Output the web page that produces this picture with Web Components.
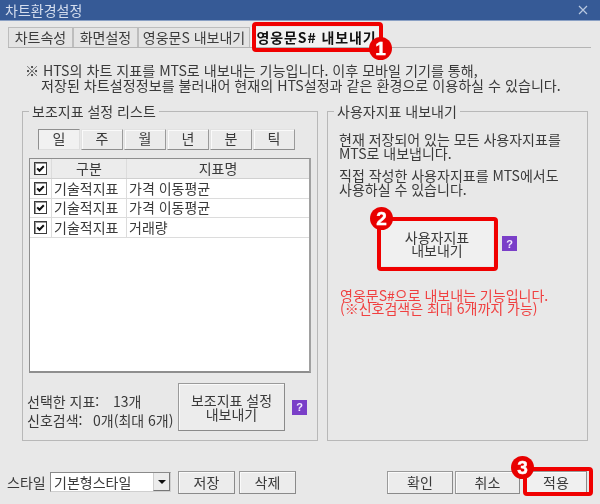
<!DOCTYPE html>
<html lang="ko">
<head>
<meta charset="utf-8">
<title>차트환경설정</title>
<style>
  html, body { margin: 0; padding: 0; background: #e8e8e8; }
  body { width: 600px; height: 504px; overflow: hidden; font: 14px "Noto Sans CJK KR", "Noto Sans", sans-serif; color: #333; }
</style>
</head>
<body>
<chart-dialog></chart-dialog>
<script>
// small helper so each element only has to give its css and markup
class Base extends HTMLElement {
  constructor() {
    super();
    this.attachShadow({ mode: 'open' });
    this.shadowRoot.innerHTML = `<style>${this.constructor.css}</style>${this.constructor.html}`;
  }
}

class TitleBar extends Base {
  static css = `
    :host { display: flex; justify-content: space-between; align-items: center; height: 20px; padding: 0 12px 0 5px; background: #365a96; color: #d5deee; font-size: 14px; border-bottom: 1px solid #8aa0c4; }
    svg { display: block; }
  `;
  static html = `<slot></slot><svg width="10" height="10" viewBox="0 0 10 10"><path d="M1 1l8 8M9 1l-8 8" stroke="#b9c8e0" stroke-width="1.2"/></svg>`;
}

class TabItem extends Base {
  static css = `
    :host { display: flex; align-items: center; justify-content: center; height: 20px; box-sizing: border-box; padding-bottom: 1px; background: #e4e4e4; border: 1px solid #bdbdbd; border-bottom: 0; color: #3c3c3c; font-size: 14px; white-space: nowrap; }
    :host([active]) { background: #f2f2f2; color: #111; font-weight: 700; border-color: transparent; margin-left: 1px; letter-spacing: 0.9px; }
  `;
  static html = `<slot></slot>`;
}

class TabBar extends Base {
  static css = `
    :host { display: flex; align-items: flex-end; height: 20px; margin: 6px 9px 0 8px; border-bottom: 1px solid #b4b4b4; }
  `;
  static html = `<slot></slot>`;
}

class GroupBox extends Base {
  static css = `
    :host { display: block; position: relative; box-sizing: border-box; border: 1px solid #b8b8b8; }
    .legend { position: absolute; left: 6px; top: -9px; padding: 0 3px; background: #e8e8e8; font-size: 14px; line-height: 16px; color: #3a3a3a; white-space: nowrap; }
  `;
  static html = `<div class="legend"><slot name="legend"></slot></div><slot></slot>`;
}

class PushButton extends Base {
  static css = `
    :host { display: flex; align-items: center; justify-content: center; box-sizing: border-box; text-align: center; background: #ececec; border: 1px solid #9a9a9a; border-right-color: #8a8a8a; border-bottom-color: #8a8a8a; box-shadow: inset 1px 1px 0 #fafafa; color: #3a3a3a; font-size: 14px; line-height: 14px; }
    :host([flat]) { border-color: #e2e2e2 #9a9a9a #8f8f8f #e2e2e2; background: #ebebeb; padding-bottom: 3px; }
    :host([down]) { background: #f1f1f1; border-color: #8f8f8f #dedede #dedede #8f8f8f; box-shadow: none; padding-bottom: 3px; }
  `;
  static html = `<div><slot></slot></div>`;
}

class HelpIcon extends Base {
  static css = `
    :host { display: flex; align-items: center; justify-content: center; width: 15px; height: 15px; background: #7a3fc8; color: #f2eaff; font: 700 11px "Liberation Sans", sans-serif; }
  `;
  static html = `?`;
}

class CheckBox extends Base {
  static css = `
    :host { display: block; width: 13px; height: 13px; box-sizing: border-box; background: #fff; border: 1px solid #3a3a3a; box-shadow: inset 1px 1px 0 #999; }
    svg { display: block; }
  `;
  static html = `<svg width="11" height="11" viewBox="0 0 11 11"><path d="M2.2 5.4l2.3 2.4 4.3-4.6" fill="none" stroke="#111" stroke-width="2"/></svg>`;
}

class IndicatorRow extends Base {
  static css = `
    :host { display: grid; grid-template-columns: 22px 75px 1fr; height: 19.5px; box-sizing: border-box; border-bottom: 1px solid #dcdcdc; background: #fff; font-size: 14px; color: #3a3a3a; }
    :host([head]) { background: #ececec; border-bottom-color: #d0d0d0; height: 20px; }
    :host([head]) .b, :host([head]) .c { justify-content: center; padding-left: 0; }
    div { display: flex; align-items: center; white-space: nowrap; overflow: hidden; }
    .a { justify-content: center; border-right: 1px solid #dcdcdc; }
    .b { padding-left: 2px; border-right: 1px solid #dcdcdc; }
    .c { padding-left: 2px; }
    .b, .c { padding-bottom: 1px; }
  `;
  static html = `<div class="a"><check-box></check-box></div><div class="b"><slot name="kind"></slot></div><div class="c"><slot name="name"></slot></div>`;
}

class IndicatorTable extends Base {
  static css = `
    :host { display: block; height: 215px; box-sizing: border-box; background: #fff; border: 1px solid #8e8e8e; border-bottom-width: 2px; border-right-width: 2px; border-right-color: #a0a0a0; }
  `;
  static html = `<slot></slot>`;
}

class CallOut extends Base {
  static css = `
    :host { position: absolute; box-sizing: border-box; border: 4px solid #f00000; border-radius: 4px; pointer-events: none; }
  `;
  static html = ``;
}

class NumberBadge extends Base {
  static css = `
    :host { position: absolute; display: flex; align-items: center; justify-content: center; width: 23px; height: 23px; border-radius: 50%; background: #e80000; color: #fff; font: 700 19px "Liberation Sans", sans-serif; -webkit-text-stroke: 0.4px #fff; }
  `;
  static html = `<slot></slot>`;
}

class StyleSelect extends Base {
  static css = `
    :host { display: flex; align-items: center; justify-content: space-between; width: 121px; height: 20px; box-sizing: border-box; padding-left: 3px; background: #fff; border: 1px solid #8a8a8a; border-right-color: #cfcfcf; border-bottom-color: #cfcfcf; font-size: 14px; color: #3a3a3a; white-space: nowrap; }
    .arrow { display: flex; align-items: center; justify-content: center; width: 17px; height: 18px; background: #ececec; border-left: 1px solid #cfcfcf; border-right: 1px solid #777; border-bottom: 1px solid #777; box-sizing: border-box; }
    .arrow i { border: 4px solid transparent; border-top: 4px solid #111; border-bottom: 0; }
  `;
  static html = `<slot></slot><div class="arrow"><i></i></div>`;
}

class ChartDialog extends Base {
  static css = `
    :host { display: block; position: relative; width: 600px; height: 504px; background: #e8e8e8; filter: blur(0.3px); }
    .notice { margin: 15px 0 0 25px; font-size: 14.1px; line-height: 15px; color: #3a3a3a; white-space: nowrap; }
    .notice span { display: block; padding-left: 16px; }
    .notice span:first-child { padding-left: 0; }
    .groups { display: flex; gap: 9px; margin: 18px 0 0 22px; }
    .left { width: 296px; height: 330px; padding: 17px 6px 0 6px; }
    .right { width: 261px; height: 330px; padding: 20px 0 0 11px; }
    .periods { display: grid; grid-template-columns: repeat(6, 42px); gap: 1px; margin: 0 0 8px 9px; width: 257px; }
    .periods push-button { height: 21px; }
    .sum { display: flex; align-items: center; margin-top: 10px; }
    .counts { width: 151px; margin: 8px 0 0 -2px; font-size: 14px; line-height: 19px; color: #3a3a3a; white-space: nowrap; }
    .counts b { display: inline-block; font-weight: 400; }
    .counts .k1 { width: 86px; }
    .counts .k2 { width: 66px; }
    .sum push-button { width: 107px; height: 48px; }
    .sum help-icon { margin-left: 7px; }
    .desc { font-size: 14px; line-height: 14px; color: #3a3a3a; white-space: nowrap; margin: 0; }
    .desc + .desc { margin-top: 8px; }
    .export { display: flex; align-items: center; margin: 25px 0 0 42px; }
    .export push-button { width: 112px; height: 45px; background: #f0f0f0; border-color: transparent; box-shadow: none; line-height: 13px; }
    .export help-icon { margin-left: 9px; }
    .warn { margin: 23px 0 0 1px; font-size: 14px; line-height: 13px; color: #f04040; white-space: nowrap; }
    .bottom { display: flex; align-items: center; margin: 29px 0 0 7px; height: 24px; }
    .bottom .lab { width: 43px; font-size: 14px; color: #3a3a3a; }
    .bottom .save { width: 57px; height: 23px; margin-left: 7px; }
    .bottom .del { width: 57px; height: 23px; margin-left: 4px; }
    .bottom .ok { width: 66px; height: 23px; margin-left: auto; }
    .bottom .no { width: 65px; height: 23px; margin-left: 2px; }
    .bottom .ap { width: 62px; height: 23px; margin: 0 13px 0 5px; background: #f0f0f0; }
    .t1 { width: 65px; } .t2 { width: 65px; } .t3 { width: 112px; } .t4 { width: 131px; }
    .r1 { left: 252px; top: 22px; width: 131px; height: 30px; }
    .r2 { left: 377px; top: 217px; width: 121px; height: 54px; }
    .r3 { left: 523px; top: 467px; width: 70px; height: 29px; }
    .n1 { left: 369px; top: 37px; }
    .n2 { left: 370px; top: 207px; }
    .n3 { left: 511px; top: 456px; }
  `;
  static html = `
    <title-bar>차트환경설정</title-bar>
    <tab-bar>
      <tab-item class="t1">차트속성</tab-item>
      <tab-item class="t2">화면설정</tab-item>
      <tab-item class="t3">영웅문S 내보내기</tab-item>
      <tab-item class="t4" active>영웅문S# 내보내기</tab-item>
    </tab-bar>
    <div class="notice">
      <span>※ HTS의 차트 지표를 MTS로 내보내는 기능입니다. 이후 모바일 기기를 통해,</span>
      <span>저장된 차트설정정보를 불러내어 현재의 HTS설정과 같은 환경으로 이용하실 수 있습니다.</span>
    </div>
    <div class="groups">
      <group-box class="left">
        <span slot="legend">보조지표 설정 리스트</span>
        <div class="periods">
          <push-button down>일</push-button><push-button flat>주</push-button><push-button flat>월</push-button>
          <push-button flat>년</push-button><push-button flat>분</push-button><push-button flat>틱</push-button>
        </div>
        <indicator-table>
          <indicator-row head><span slot="kind">구분</span><span slot="name">지표명</span></indicator-row>
          <indicator-row><span slot="kind">기술적지표</span><span slot="name">가격 이동평균</span></indicator-row>
          <indicator-row><span slot="kind">기술적지표</span><span slot="name">가격 이동평균</span></indicator-row>
          <indicator-row><span slot="kind">기술적지표</span><span slot="name">거래량</span></indicator-row>
        </indicator-table>
        <div class="sum">
          <div class="counts"><b class="k1">선택한 지표:</b>13개<br><b class="k2">신호검색:</b>0개(최대 6개)</div>
          <push-button>보조지표 설정<br>내보내기</push-button>
          <help-icon></help-icon>
        </div>
      </group-box>
      <group-box class="right">
        <span slot="legend">사용자지표 내보내기</span>
        <p class="desc">현재 저장되어 있는 모든 사용자지표를<br>MTS로 내보냅니다.</p>
        <p class="desc">직접 작성한 사용자지표를 MTS에서도<br>사용하실 수 있습니다.</p>
        <div class="export">
          <push-button>사용자지표<br>내보내기</push-button>
          <help-icon></help-icon>
        </div>
        <div class="warn">영웅문S#으로 내보내는 기능입니다.<br>(※신호검색은 최대 6개까지 가능)</div>
      </group-box>
    </div>
    <div class="bottom">
      <span class="lab">스타일</span>
      <style-select>기본형스타일</style-select>
      <push-button class="save">저장</push-button>
      <push-button class="del">삭제</push-button>
      <push-button class="ok">확인</push-button>
      <push-button class="no">취소</push-button>
      <push-button class="ap">적용</push-button>
    </div>
    <call-out class="r1"></call-out>
    <call-out class="r2"></call-out>
    <call-out class="r3"></call-out>
    <number-badge class="n1">1</number-badge>
    <number-badge class="n2">2</number-badge>
    <number-badge class="n3">3</number-badge>
  `;
}

customElements.define('title-bar', TitleBar);
customElements.define('tab-item', TabItem);
customElements.define('tab-bar', TabBar);
customElements.define('group-box', GroupBox);
customElements.define('push-button', PushButton);
customElements.define('help-icon', HelpIcon);
customElements.define('check-box', CheckBox);
customElements.define('indicator-row', IndicatorRow);
customElements.define('indicator-table', IndicatorTable);
customElements.define('call-out', CallOut);
customElements.define('number-badge', NumberBadge);
customElements.define('style-select', StyleSelect);
customElements.define('chart-dialog', ChartDialog);
</script>
</body>
</html>
